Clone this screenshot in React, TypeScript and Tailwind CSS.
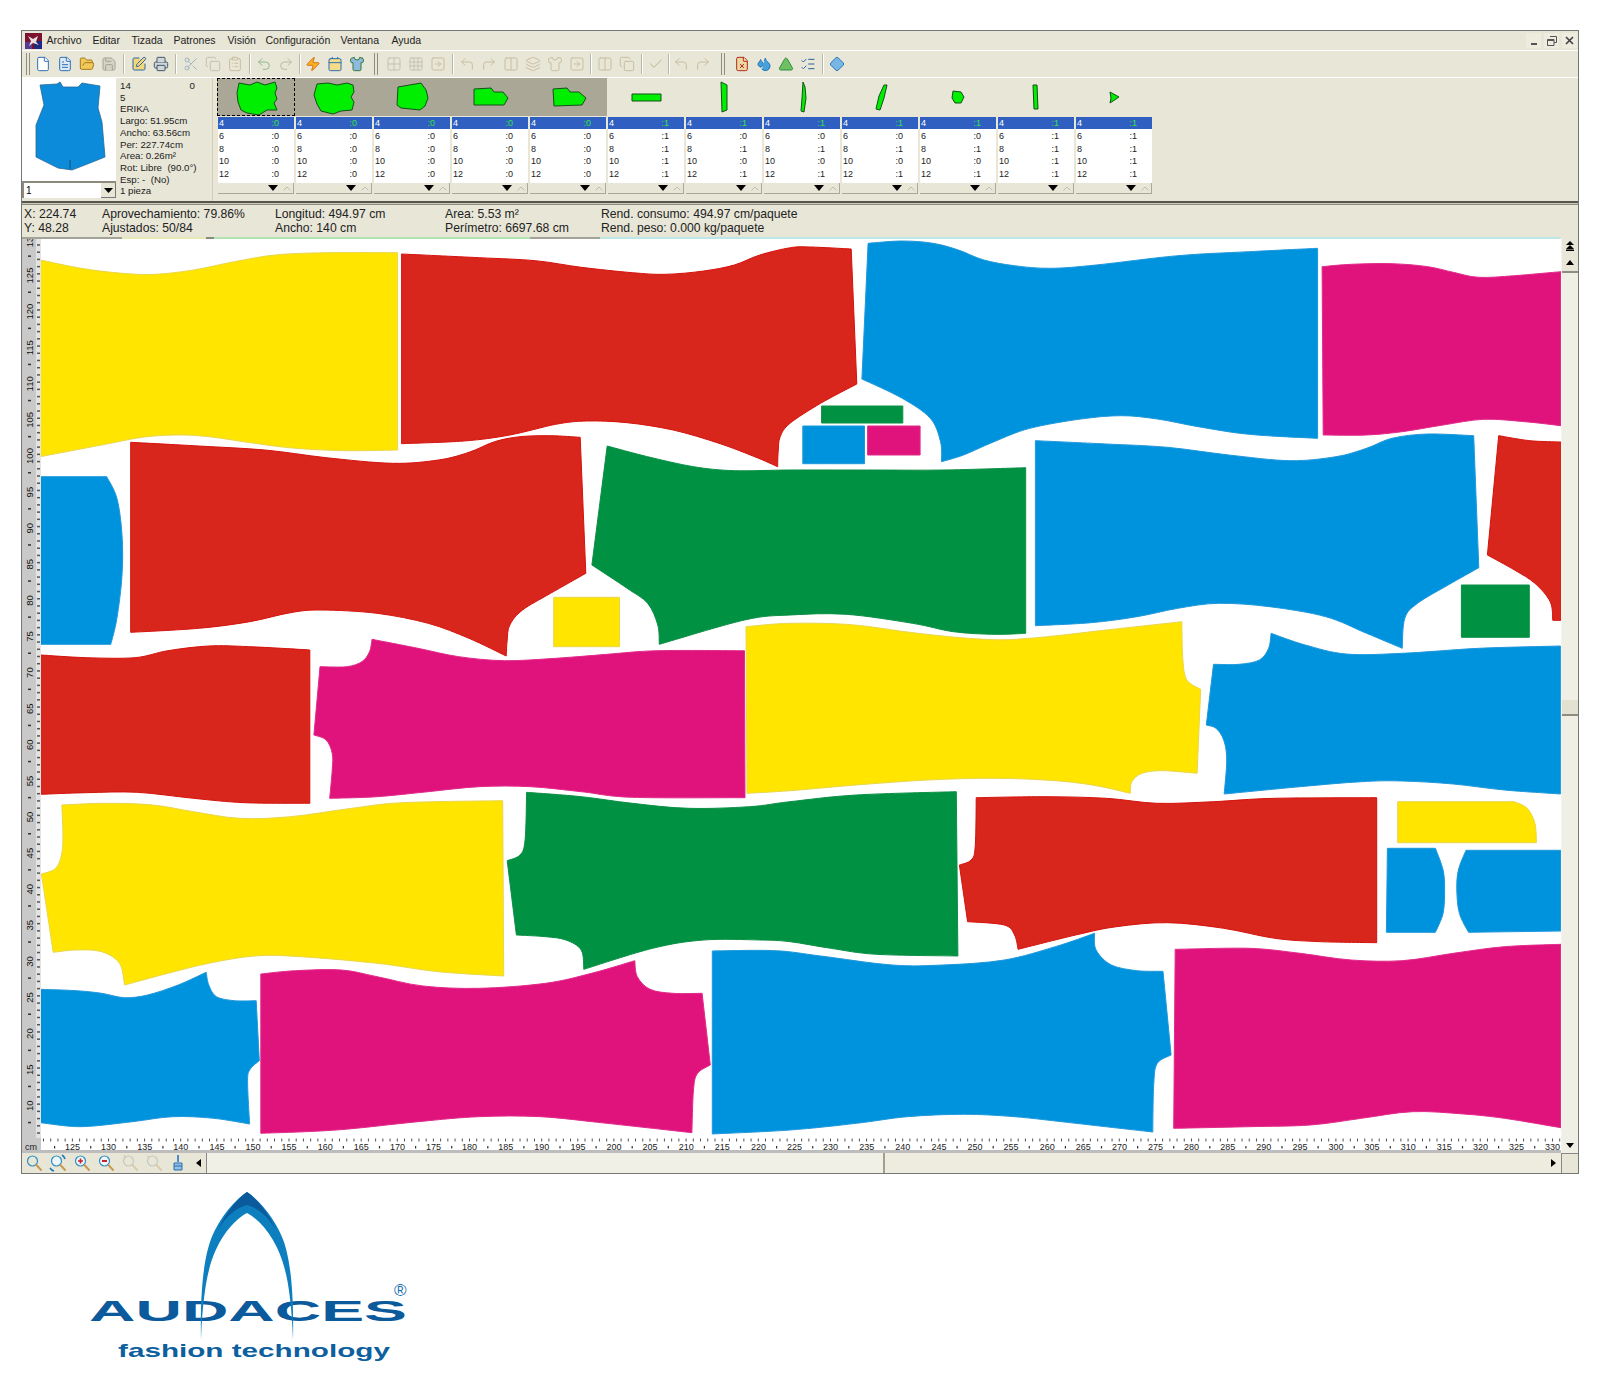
import React from "react";
import {
  File, FileText, FolderOpen, Save, SquarePen, Printer, Scissors, Copy, ClipboardList, Undo2, Redo2, Zap,
  Calendar, Shirt, Grid2x2, Grid3x3, SquareArrowRight, CornerUpLeft, CornerUpRight, Columns2, Layers, Check,
  Triangle, ListChecks, Diamond, FileX, Droplets,
} from "lucide-react";

const FRAMES: Record<string, [number, number]> = {
  A: [20, 235], B: [790, 235], C: [20, 620], D: [790, 620], E: [20, 930], F: [790, 930],
};

function crPath(pts: number[][], first: boolean) {
  let d = (first ? "M" : "L") + pts[0][0].toFixed(1) + " " + pts[0][1].toFixed(1);
  for (let i = 0; i < pts.length - 1; i++) {
    const p0 = pts[Math.max(i - 1, 0)], p1 = pts[i], p2 = pts[i + 1], p3 = pts[Math.min(i + 2, pts.length - 1)];
    const c1 = [p1[0] + (p2[0] - p0[0]) / 6, p1[1] + (p2[1] - p0[1]) / 6];
    const c2 = [p2[0] - (p3[0] - p1[0]) / 6, p2[1] - (p3[1] - p1[1]) / 6];
    d += `C${c1[0].toFixed(1)} ${c1[1].toFixed(1)} ${c2[0].toFixed(1)} ${c2[1].toFixed(1)} ${p2[0].toFixed(1)} ${p2[1].toFixed(1)}`;
  }
  return d;
}

function piecePath(spec: string) {
  return (
    spec.split("|").map((seg, si) => {
      const toks = seg.trim().split(/\s+/);
      let f: [number, number] = [0, 0];
      const pts: number[][] = [];
      for (let i = 0; i < toks.length; ) {
        if (FRAMES[toks[i]]) { f = FRAMES[toks[i]]; i++; continue; }
        pts.push([f[0] + Number(toks[i]) / 1.96, f[1] + Number(toks[i + 1]) / 3]);
        i += 2;
      }
      return crPath(pts, si === 0);
    }).join("") + "Z"
  );
}

const Y = ["#ffe500", "#ead64a"], R = ["#d9261c", "#d4120c"], B = ["#0093dd", "#1f98dc"], M = ["#e0137c", "#e22a8a"], G = ["#009142", "#0b8f46"];

const PIECES: [string[], string][] = [
  [Y, "A 40 75 120 100 200 115 265 118 340 105 420 80 500 60 600 53 740 53|A 740 645 640 647 540 640 460 625 370 605 305 600 240 607 160 630 40 665"],
  [R, "A 748 57 900 68 1010 77 1100 97 1200 113 1265 118 1340 108 1400 90 1450 60 1510 38 B 40 36 120 42|B 131 447 60 505 0 565 A 1490 605 1486 650 1485 695|A 1485 695 1440 665 1370 625 1280 585 1190 563 1110 558 1050 568 960 600 870 618 748 626"],
  [B, "B 153 25 220 18 280 25 330 45 380 75 440 92 510 100 600 90 760 62 900 50 1034 40|B 1034 610 900 598 800 575 720 552 650 542 570 552 470 580 400 620 340 660 297 680|B 297 680 295 620 275 550 220 490 141 432"],
  [G, "B 62 513|B 221 513|B 221 564|B 62 564"],
  [B, "B 25 573|B 146 573|B 146 686|B 25 686"],
  [M, "B 152 573|B 255 573|B 255 660|B 152 660"],
  [M, "B 1043 95 1100 88 1180 86 1250 95 1300 112 1350 127 1420 122 1511 110|B 1511 572 1440 560 1360 553 1280 570 1200 590 1130 600 1045 600"],
  [B, "A 40 725|A 170 725 190 790 200 900 200 1020 190 1150 178 1228|A 40 1228"],
  [R, "A 217 622 350 633 480 645 600 668 730 685 820 675 880 652 930 620 980 605 1040 602 1098 607|A 1109 1015 1040 1075 985 1125 960 1170 955 1215 953 1263|A 953 1263 880 1210 800 1165 700 1135 590 1125 530 1133 450 1160 350 1180 217 1192"],
  [G, "A 1151 633 1230 665 1320 695 1400 707 B 0 705 150 705 300 705 462 698|B 462 1195 400 1198 320 1190 240 1165 110 1138 0 1140 A 1420 1155 1253 1228|A 1253 1228 1250 1170 1230 1105 1190 1060 1121 990"],
  [Y, "A 1046 1087|A 1175 1087|A 1175 1235|A 1046 1235"],
  [B, "B 481 617 620 627 740 637 860 660 980 677 1070 665 1130 640 1180 610 1250 597 1340 602|B 1350 998 1290 1050 1230 1105 1205 1150 1200 1240|B 1200 1240 1130 1195 1050 1145 940 1115 840 1105 760 1120 680 1145 590 1163 481 1172"],
  [G, "B 1316 1050|B 1449 1050|B 1449 1207|B 1316 1207"],
  [R, "B 1389 602 1450 617 1511 621|B 1511 1156|B 1495 1156 1490 1100 1460 1045 1420 1005 1367 960"],
  [R, "C 40 105 130 113 225 113 290 92 370 78 450 80 568 90|C 568 550 440 548 340 535 230 517 130 518 40 523"],
  [M, "C 690 58 780 85 860 110 950 122 1050 115 1150 103 1250 92 1420 92|C 1421 533 1200 532 1100 515 1000 500 900 500 800 515 700 530 607 535|C 607 535 612 450 612 400 600 360 576 345|C 588 140 640 140 670 125 685 95 690 58"],
  [Y, "C 1423 20 1509 10 D 120 14 250 40 380 58 470 55 620 30 768 5|D 768 5 770 120 778 180 805 208|D 798 460 730 452 690 460 670 485 667 520|D 667 520 600 497 520 482 400 475 270 480 130 495 0 512 C 1425 520"],
  [B, "D 943 40 1010 75 1090 102 1200 100 1350 85 1510 78|D 1510 522 1400 510 1300 492 1200 483 1120 485 1000 500 851 522|D 851 522 856 420 850 360 835 325 816 315|D 830 133 880 133 920 120 938 85 943 40"],
  [Y, "C 82 555 170 550 260 555 340 575 430 595 530 590 650 565 750 548 946 542|E 948 138 820 125 700 100 550 80 460 78 370 100 290 130 205 165|E 205 165 195 100 160 65 110 60 65 67|C 42 762 70 745 82 700 84 640 82 555"],
  [G, "C 993 517 1100 530 1200 550 1310 565 1430 560 D 0 545 130 525 326 515|D 329 1008 170 1003 80 985 0 965 C 1450 960 1340 960 1240 985 1105 1048|C 1105 1048 1100 990 1070 960 1030 950 973 945|C 955 722 980 705 990 660 993 517"],
  [R, "D 365 533 500 530 620 535 720 550 830 545 950 535 1150 533|D 1150 968 1040 965 950 955 850 925 740 908 640 920 560 945 447 988|D 447 988 440 945 420 915 348 905|D 332 735 355 720 363 680 365 533"],
  [Y, "D 1191 545|D 1420 545 1445 565 1460 610 1463 668|D 1191 668"],
  [B, "D 1171 685|D 1265 685 1280 750 1283 810 1280 880 1265 937|D 1169 937"],
  [B, "D 1511 691|D 1325 691 1310 750 1307 810 1312 880 1330 937|D 1511 933"],
  [B, "E 40 178 110 182 160 190 205 203 250 195 310 165 365 127|E 365 127 370 165 385 200 420 212 463 212|E 469 392 450 420 446 460 450 582|E 450 582 380 565 300 560 220 575 120 590 40 578"],
  [M, "E 472 132 540 122 630 120 700 140 790 168 900 175 1030 160 1120 130 1205 92|E 1205 92 1210 140 1235 178 1280 190 1337 190|E 1353 405 1328 430 1320 480 1317 608|E 1317 608 1150 580 1020 560 900 560 780 575 620 600 472 610"],
  [B, "E 1357 63 1480 62 F 60 78 200 105 300 105 420 90 520 50 597 10|F 597 10 600 60 630 105 680 122 731 124|F 747 375 720 400 713 460 711 606|F 711 606 560 580 440 560 340 553 230 560 130 580 0 600 E 1357 612"],
  [M, "F 755 58 900 55 1000 70 1100 90 1200 92 1300 70 1400 50 1511 43|F 1511 593 1400 565 1320 552 1220 545 1120 565 1020 585 900 590 752 595"],
];

const font = "font-['Liberation_Sans',Arial,sans-serif]";

const MENU: [string, string][] = [
  ["Archivo", "w-[46px]"], ["Editar", "w-[39px]"], ["Tizada", "w-[42px]"], ["Patrones", "w-[54px]"],
  ["Visión", "w-[38px]"], ["Configuración", "w-[75px]"], ["Ventana", "w-[51px]"], ["Ayuda", "w-[40px]"],
];

const TAN = "#c9bd9f";
function Cell({ I, c, fill }: { I: any; c: string; fill?: string }) {
  return (
    <span className="w-[22px] h-[20px] flex items-center justify-center">
      <I size={16} strokeWidth={1.5} color={c} fill={fill ?? "none"} />
    </span>
  );
}
function Sep({ w }: { w: string }) {
  return (
    <span className={`${w} h-[20px] flex justify-center`}>
      <span className="w-[2px] h-full border-l border-[#b9b7a6] border-r border-r-white" />
    </span>
  );
}
function Grip({ w }: { w: string }) {
  return (
    <span className={`${w} h-[22px] flex justify-center gap-[2px]`}>
      <span className="w-[1px] h-full bg-[#8f8d80]" />
      <span className="w-[1px] h-full bg-[#8f8d80]" />
    </span>
  );
}

function Toolbar() {
  return (
    <div className="h-[27px] border-t border-white flex items-center bg-[#e8e6d7] pl-[2px]">
      <Grip w="w-[8px]" />
      <Cell I={File} c="#2f6fb5" fill="#fff" />
      <Cell I={FileText} c="#2f6fb5" fill="#dcebf7" />
      <Cell I={FolderOpen} c="#a8761a" fill="#f0c95a" />
      <Cell I={Save} c="#a3a294" fill="#d5d3c5" />
      <Sep w="w-[8px]" />
      <Cell I={SquarePen} c="#2b66a8" fill="#f3d77a" />
      <Cell I={Printer} c="#445766" fill="#cfd6dc" />
      <Sep w="w-[8px]" />
      <Cell I={Scissors} c="#9fb6c8" />
      <Cell I={Copy} c="#c2c0ae" />
      <Cell I={ClipboardList} c={TAN} />
      <Sep w="w-[7px]" />
      <Cell I={Undo2} c="#8fb98a" />
      <Cell I={Redo2} c="#b9ba9e" />
      <Sep w="w-[5px]" />
      <Cell I={Zap} c="#d9701a" fill="#f5b41f" />
      <Cell I={Calendar} c="#2f6fb5" fill="#f5dc8a" />
      <Cell I={Shirt} c="#2f7a3a" fill="#8fb9e0" />
      <Grip w="w-[15px]" />
      <Cell I={Grid2x2} c="#c3c1b1" />
      <Cell I={Grid3x3} c="#c3c1b1" />
      <Cell I={SquareArrowRight} c={TAN} />
      <Sep w="w-[7px]" />
      <Cell I={CornerUpLeft} c={TAN} />
      <Cell I={CornerUpRight} c={TAN} />
      <Cell I={Columns2} c={TAN} />
      <Cell I={Layers} c={TAN} />
      <Cell I={Shirt} c={TAN} />
      <Cell I={SquareArrowRight} c={TAN} />
      <Sep w="w-[6px]" />
      <Cell I={Columns2} c={TAN} />
      <Cell I={Copy} c={TAN} />
      <Sep w="w-[7px]" />
      <Cell I={Check} c="#a3c08a" />
      <Sep w="w-[3px]" />
      <Cell I={CornerUpLeft} c={TAN} />
      <Cell I={CornerUpRight} c={TAN} />
      <Grip w="w-[17px]" />
      <Cell I={FileX} c="#b02a1f" fill="#ecd8a0" />
      <Cell I={Droplets} c="#2274b5" fill="#47a1dc" />
      <Cell I={Triangle} c="#2f8f3e" fill="#6fbf63" />
      <Cell I={ListChecks} c="#24609e" fill="#fff" />
      <Sep w="w-[7px]" />
      <Cell I={Diamond} c="#2a74b8" fill="#76b7e6" />
    </div>
  );
}

const SHAPES: string[] = [
  "M22 5L33 7L40 4L48 7L58 4L60 10L58 15L60 21L57 25L60 32L50 32L42 37L30 35L24 32L21 24L20 15Z",
  "M22 6L33 5L42 7L52 5L58 7L59 14L56 19L59 24L57 32L46 33L38 36L26 33L22 26L19 17Z",
  "M25 9L48 5L53 12L55 20L52 28L47 32L28 30L24 27Z",
  "M23 11L40 10L43 14L52 14L57 20L53 27L23 27Z",
  "M24 11L38 10L41 14L50 14L57 20L53 27L25 28Z",
  "M25 16H54V23H25Z",
  "M36 4L42 7L42 32L37 34Z",
  "M40 4L42 9L43 20L41 34L38 33L39 20Z",
  "M43 7L46 7L43 20L39 32L35 31L38 18Z",
  "M34 13L42 14L45 19L42 25L36 25L33 20Z",
  "M36 7L40 7L41 31L37 31Z",
  "M35 14L44 19L35 25L36 20Z",
];

const SIZES = ["4", "6", "8", "10", "12"];
function values(col: number) {
  if (col < 5) return ["0", "0", "0", "0", "0"];
  if (col === 5 || col > 9) return ["1", "1", "1", "1", "1"];
  return ["1", "0", "1", "0", "1"];
}

function PieceColumn({ col }: { col: number }) {
  const v = values(col);
  return (
    <div className="w-[78px] flex flex-col">
      <div className={`h-[38px] w-[78px] ${col < 5 ? "bg-[#aba797]" : ""} relative`}>
        {col === 0 && <div className="absolute inset-0 border border-dashed border-black" />}
        <svg viewBox="0 0 78 38" width={78} height={38} className="block">
          <path d={SHAPES[col]} fill="#00ee00" stroke="#14501a" strokeWidth={1} />
        </svg>
      </div>
      <div className="mt-[1px] ml-[1px] w-[76px] text-[9px] leading-[12px]">
        <div className="h-[12px] bg-[#2f5fc1] flex justify-between pl-[1px] pr-[15px] text-white">
          <span>4</span>
          <span className="text-[#34e04a]">:{v[0]}</span>
        </div>
        <div className="bg-white h-[54px] pt-[1px]">
          {SIZES.slice(1).map((s, i) => (
            <div key={s} className="h-[12.7px] flex justify-between pl-[1px] pr-[15px] text-[#222]">
              <span>{s}</span>
              <span>:{v[i + 1]}</span>
            </div>
          ))}
        </div>
        <div className="h-[11px] bg-[#e8e6d7] border-b border-r border-[#a9a89a] flex items-center justify-end gap-[5px] pr-[2px]">
          <svg width={10} height={6} viewBox="0 0 10 6"><path d="M0 0H10L5 6Z" fill="#000" /></svg>
          <svg width={8} height={5} viewBox="0 0 8 5"><path d="M0.5 4.5L4 1L7.5 4.5" fill="none" stroke="#bdbcae" strokeWidth={1} /></svg>
        </div>
      </div>
    </div>
  );
}

function Panel() {
  return (
    <div className="h-[124px] border-t border-white flex bg-[#e8e6d7]">
      <div className="w-[94px] flex flex-col">
        <div className="h-[103px] bg-white">
          <svg width={94} height={103} viewBox="22 78 94 103" className="block">
            <path
              d="M40 85L57 84L60 82L63 87L78 87L82 83L100 86L98 108L102 122L105 157L90 163L72 170L58 168L36 157L36 125L44 105Z"
              fill="#0b8bd9"
              stroke="#2a6a98"
              strokeWidth={0.8}
            />
            <path d="M70 160V169" stroke="#1a4c72" strokeWidth={1} />
          </svg>
        </div>
        <div className="h-[17px] bg-white border-t-2 border-l-2 border-[#8c8a7c] flex items-center justify-between text-[10px] pl-[2px]">
          <span>1</span>
          <span className="w-[15px] h-[15px] bg-[#e8e6d7] border-b border-r border-[#777] flex items-center justify-center">
            <svg width={9} height={5} viewBox="0 0 9 5"><path d="M0 0H9L4.5 5Z" fill="#000" /></svg>
          </span>
        </div>
      </div>
      <div className="w-[92px] ml-[4px] pt-[2px] text-[9.7px] leading-[11.7px] text-[#222] relative">
        <div className="flex justify-between pr-[17px]"><span>14</span><span>0</span></div>
        <div>5</div>
        <div>ERIKA</div>
        <div>Largo: 51.95cm</div>
        <div>Ancho: 63.56cm</div>
        <div>Per: 227.74cm</div>
        <div>Area: 0.26m²</div>
        <div>Rot: Libre&nbsp; (90.0°)</div>
        <div>Esp: -&nbsp; (No)</div>
        <div>1 pieza</div>
      </div>
      <div className="w-[5px] border-l border-[#cfcdbc]" />
      {SHAPES.map((_, i) => <PieceColumn key={i} col={i} />)}
    </div>
  );
}

function Status() {
  const Col = ({ w, a, b }: { w: string; a: string; b: string }) => (
    <div className={w}>
      <div>{a}</div>
      <div>{b}</div>
    </div>
  );
  return (
    <div className="h-[32px] bg-[#e8e6d7] flex pl-[2px] pt-[2px] text-[12.2px] leading-[14px] text-[#222]">
      <Col w="w-[78px]" a="X: 224.74" b="Y: 48.28" />
      <Col w="w-[173px]" a="Aprovechamiento: 79.86%" b="Ajustados: 50/84" />
      <Col w="w-[170px]" a="Longitud: 494.97 cm" b="Ancho: 140 cm" />
      <Col w="w-[156px]" a="Area: 5.53 m²" b="Perímetro: 6697.68 cm" />
      <Col w="w-[300px]" a="Rend. consumo: 494.97 cm/paquete" b="Rend. peso: 0.000 kg/paquete" />
    </div>
  );
}

function LeftRuler() {
  const labels: number[] = [];
  for (let n = 130; n >= 10; n -= 5) labels.push(n);
  const ticks: number[] = [];
  for (let y = 237; y < 1138; y += 7.22) ticks.push(y);
  return (
    <svg width={19} height={899} viewBox="22 239 19 899" className="block shrink-0 bg-[#c9c9c9]">
      <rect x={36} y={239} width={5} height={899} fill="#e4e4e4" />
      {ticks.map((y) => (
        <rect key={y} x={37} y={y} width={3} height={1.5} fill="#555" />
      ))}
      {labels.map((n) => {
        const y = 275.5 + (125 - n) * 7.22;
        return (
          <g key={n}>
            <text x={33} y={y} transform={`rotate(-90 33 ${y})`} textAnchor="middle" fontSize={9.5} fill="#111" fontFamily="Liberation Sans, sans-serif">{n}</text>
            <rect x={28} y={y + 16} width={3} height={1.5} fill="#333" />
          </g>
        );
      })}
    </svg>
  );
}

function BottomRuler() {
  const labels: number[] = [];
  for (let n = 125; n <= 330; n += 5) labels.push(n);
  const ticks: number[] = [];
  for (let x = 43; x < 1561; x += 7.22) ticks.push(x);
  return (
    <svg width={1539} height={15} viewBox="22 1138 1539 15" className="block">
      <rect x={22} y={1138} width={1539} height={15} fill="#fff" />
      <rect x={22} y={1138} width={19} height={15} fill="#c9c9c9" />
      <rect x={22} y={1150} width={1539} height={3} fill="#bdbdbd" />
      {ticks.map((x) => (
        <rect key={x} x={x} y={1138.5} width={1} height={3} fill="#555" />
      ))}
      <text x={25} y={1150} fontSize={9} fill="#222" fontFamily="Liberation Sans, sans-serif">cm</text>
      {labels.map((n) => {
        const x = 72.5 + (n - 125) * 7.22;
        return (
          <g key={n}>
            <text x={x} y={1150} textAnchor="middle" fontSize={9} fill="#222" fontFamily="Liberation Sans, sans-serif">{n}</text>
            <rect x={x - 18.5} y={1146} width={1.2} height={2.5} fill="#333" />
          </g>
        );
      })}
    </svg>
  );
}

function Canvas() {
  return (
    <svg width={1520} height={899} viewBox="41 239 1520 899" className="block bg-white">
      {PIECES.map(([c, d], i) => (
        <path key={i} d={piecePath(d)} fill={c[0]} stroke={c[1]} strokeWidth={1} strokeLinejoin="miter" />
      ))}
    </svg>
  );
}

function Logo() {
  return (
    <svg width={450} height={217} viewBox="0 1174 450 217" className="block">
      <text x={89} y={1321} fontSize={30} fontWeight={700} fill="#0a5a9c" textLength={318} lengthAdjust="spacingAndGlyphs" fontFamily="Liberation Sans, sans-serif">AUDACES</text>
      <text x={118} y={1357} fontSize={19} fontWeight={700} fill="#0d5f9e" textLength={272} lengthAdjust="spacingAndGlyphs" fontFamily="Liberation Sans, sans-serif">fashion technology</text>
      <text x={394} y={1296} fontSize={17} fill="#1a6fae" fontFamily="Liberation Sans, sans-serif">®</text>
      <path d="M247 1192C232 1202 217 1222 210 1242C204 1260 200 1290 201 1340C202 1310 205 1285 209 1270C215 1245 230 1222 247 1213Z" fill="#0d7fbf" />
      <path d="M247 1192C262 1202 277 1222 284 1242C290 1260 294 1290 293 1340C292 1310 289 1285 285 1270C279 1245 264 1222 247 1213Z" fill="#0d7fbf" />
      <path d="M247 1192C238 1198 226 1212 218 1230C226 1216 236 1208 247 1205C258 1208 268 1216 276 1230C268 1212 256 1198 247 1192Z" fill="#0a5a9c" />
    </svg>
  );
}

function ArrowBtn({ up2, down }: { up2?: boolean; down?: boolean }) {
  return (
    <svg width={10} height={10} viewBox="0 0 10 10" className="block">
      {up2 ? (
        <path d="M5 0L9 4H1ZM5 4L9 8H1Z M1 8.5H9V10H1Z" fill="#000" />
      ) : down ? (
        <path d="M1 3H9L5 8Z" fill="#000" />
      ) : (
        <path d="M1 7H9L5 2Z" fill="#000" />
      )}
    </svg>
  );
}

function Mag({ kind }: { kind: string }) {
  const dim = kind === "dimL" || kind === "dimR";
  const lens = dim ? "#c4c9c0" : "#2f8fc4";
  const handle = dim ? "#d8ccaf" : "#c99a4e";
  return (
    <svg width={18} height={18} viewBox="0 0 18 18" className="block">
      <circle cx={7.5} cy={7} r={5} fill={kind === "plain" || dim ? "none" : "#eef6fb"} stroke={lens} strokeWidth={1.2} />
      <path d="M11.5 11L16 16" stroke={handle} strokeWidth={2} strokeLinecap="round" />
      {kind === "plus" && <path d="M5 7H10M7.5 4.5V9.5" stroke="#c8232c" strokeWidth={1.6} />}
      {kind === "minus" && <path d="M5 7H10" stroke="#c8232c" strokeWidth={2} />}
      {kind === "fit" && <path d="M1 14A7 7 0 0 0 5 17M13 1A7 7 0 0 1 16 5" fill="none" stroke="#1f78b4" strokeWidth={1.6} />}
      {kind === "dimL" && <path d="M3 1L5 4" stroke="#c4c9c0" strokeWidth={1.2} />}
      {kind === "dimR" && <path d="M2 2L5 3" stroke="#d8ccaf" strokeWidth={1.2} />}
    </svg>
  );
}

function Brush() {
  return (
    <svg width={16} height={18} viewBox="0 0 16 18" className="block">
      <path d="M7 1H9V8H7Z" fill="#4d8cc4" />
      <path d="M4 9H12V16H4Z" fill="#8fc0e8" stroke="#2f6fa8" strokeWidth={1} />
      <path d="M4 12H12" stroke="#2f6fa8" strokeWidth={1} />
    </svg>
  );
}

export default function App() {
  return (
    <div className={`min-h-[1391px] bg-white pt-[30px] ${font}`}>
      <div className="ml-[21px] w-[1558px] border border-[#777] bg-[#e8e6d7]">
        <div className="h-[19px] flex items-center pl-[3px] text-[10.5px] text-[#222]">
          <svg width={17} height={16} viewBox="0 0 17 16" className="block mr-[4.5px]">
            <rect width={17} height={16} fill="#7a1230" />
            <rect x={9} y={8} width={8} height={8} fill="#1e2a80" />
            <rect x={0} y={9} width={7} height={7} fill="#5a3a90" />
            <path d="M3 3L8 6L13 3L11 9L14 12L8 10L4 13L6 8Z" fill="#e8e0e0" />
          </svg>
          {MENU.map(([t, w]) => (
            <span key={t} className={w}>{t}</span>
          ))}
          <div className="ml-auto flex gap-[3px] pr-[1px]">
            <span className="w-[15px] h-[15px] bg-[#eeecdf] flex items-end justify-center pb-[3px]"><span className="w-[6px] h-[2px] bg-[#555]" /></span>
            <span className="w-[15px] h-[15px] bg-[#eeecdf] flex items-center justify-center">
              <svg width={10} height={10} viewBox="0 0 10 10"><path d="M3 .5H9.5V6.5H7M.5 3.5H7V9.5H.5ZM.5 4.5H7" fill="none" stroke="#555" strokeWidth={1} /></svg>
            </span>
            <span className="w-[15px] h-[15px] bg-[#eeecdf] flex items-center justify-center">
              <svg width={9} height={9} viewBox="0 0 9 9"><path d="M1 1L8 8M8 1L1 8" stroke="#444" strokeWidth={1.7} /></svg>
            </span>
          </div>
        </div>
        <Toolbar />
        <Panel />
        <div className="h-[4px] border-t-2 border-b border-t-[#55554d] border-b-[#8d8c80] bg-[#c9c8ba]" />
        <Status />
        <div className="flex">
          <div className="w-[1539px]">
            <div className="h-[2px] flex">
              <span className="w-[100px] bg-[#a3a397]" />
              <span className="w-[84px] bg-[#e7e7b8]" />
              <span className="w-[8px] bg-[#8a8a80]" />
              <span className="w-[316px] bg-[#b4e2ae]" />
              <span className="w-[70px] bg-[#a3a397]" />
              <span className="flex-1 bg-[#bfe6e6]" />
            </div>
            <div className="flex">
              <LeftRuler />
              <Canvas />
            </div>
            <BottomRuler />
          </div>
          <div className="w-[17px] h-[916px] bg-[#f0efe6] flex flex-col items-center border-l border-[#f5f4ec]">
            <div className="h-[18px] w-full bg-[#e8e6d7] flex items-center justify-center"><ArrowBtn up2 /></div>
            <div className="h-[18px] w-full bg-[#e8e6d7] border-b-2 border-[#8d8c80] flex items-center justify-center"><ArrowBtn /></div>
            <div className="h-[427px] w-full" />
            <div className="h-[16px] w-full bg-[#e3e1d2] border-b-2 border-[#8d8c80]" />
            <div className="flex-1 w-full" />
            <div className="h-[16px] w-full flex items-center justify-center"><ArrowBtn down /></div>
          </div>
        </div>
        <div className="h-[20px] flex items-center bg-[#e8e6d7]">
          <div className="flex items-center w-[169px]">
            {["plain", "fit", "plus", "minus", "dimL", "dimR"].map((k) => (
              <span key={k} className="w-[24px] flex items-center justify-center"><Mag kind={k} /></span>
            ))}
            <span className="w-[24px] flex items-center justify-center"><Brush /></span>
          </div>
          <span className="w-[16px] h-full flex items-center justify-center border-r border-[#888]">
            <svg width={5} height={8} viewBox="0 0 5 8"><path d="M5 0V8L0 4Z" fill="#000" /></svg>
          </span>
          <div className="w-[678px] h-full bg-[#f1f0e6] border-r-2 border-[#a09f92]" />
          <div className="flex-1 h-full bg-[#eeecdf] flex items-center justify-end pr-[5px]">
            <svg width={5} height={8} viewBox="0 0 5 8"><path d="M0 0V8L5 4Z" fill="#000" /></svg>
          </div>
          <div className="w-[17px] h-full bg-[#e8e6d7] border-l border-t border-[#888]" />
        </div>
      </div>
      <Logo />
    </div>
  );
}
